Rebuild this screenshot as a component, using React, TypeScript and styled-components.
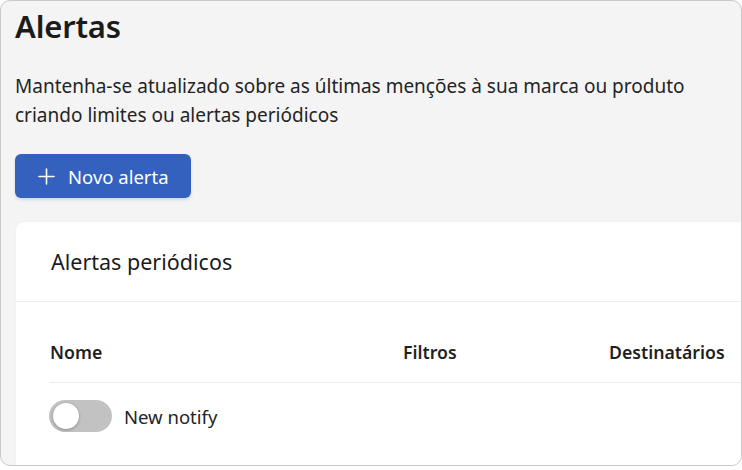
import React from "react";
import styled, { createGlobalStyle } from "styled-components";

const GlobalStyle = createGlobalStyle`
  html, body { margin: 0; padding: 0; background: #ffffff; }
  body { font-family: "Noto Sans", "Open Sans", sans-serif; color: #1f1f1f; }
  * { box-sizing: border-box; }
`;

const Frame = styled.div`
  width: 742px;
  height: 466px;
  border: 1px solid #c9c9c9;
  border-radius: 10px;
  background: #f4f4f4;
  overflow: hidden;
  padding-left: 14px;
  display: flex;
  flex-direction: column;
`;

const Title = styled.h1`
  margin: 3px 0 0 0;
  font-size: 31px;
  line-height: 44px;
  font-weight: 600;
  color: #1b1b1b;
  letter-spacing: -0.2px;
`;

const Description = styled.p`
  margin: 24px 0 0 0;
  width: 690px;
  font-size: 19px;
  line-height: 29px;
  color: #242424;
`;

const PrimaryButton = styled.button`
  margin-top: 24px;
  align-self: flex-start;
  height: 44px;
  width: 176px;
  display: flex;
  align-items: center;
  gap: 13px;
  padding: 0 0 0 23px;
  border: none;
  border-radius: 6px;
  background: #3461bd;
  color: #ffffff;
  font-family: inherit;
  font-size: 18.5px;
  box-shadow: 0 2px 3px rgba(52, 97, 189, 0.18);
  cursor: pointer;
`;

const Card = styled.section`
  margin-top: 24px;
  margin-left: 1px;
  width: 760px;
  flex: 1;
  background: #ffffff;
  border-radius: 8px 0 0 0;
  box-shadow: 0 0 2px rgba(0, 0, 0, 0.06);
`;

const CardHeader = styled.div`
  height: 80px;
  padding-left: 35px;
  display: flex;
  align-items: center;
  border-bottom: 1px solid #efefef;
  font-size: 21.5px;
  color: #1b1b1b;
`;

const Table = styled.div`
  margin-left: 33px;
`;

const HeadRow = styled.div`
  height: 81px;
  display: grid;
  grid-template-columns: 353px 206px 1fr;
  align-items: center;
  padding-left: 1px;
  padding-top: 19px;
  border-bottom: 1px solid #ececec;
  font-size: 17.7px;
  font-weight: 600;
  color: #1f1f1f;
`;

const BodyRow = styled.div`
  height: 66px;
  display: flex;
  align-items: center;
  gap: 12px;
  font-size: 18.5px;
  color: #242424;
`;

const Toggle = styled.span<{ $on?: boolean }>`
  width: 63px;
  height: 32px;
  border-radius: 16px;
  background: ${(p) => (p.$on ? "#3461bd" : "#c2c2c2")};
  display: flex;
  align-items: center;
  padding: 0 4px;
  justify-content: ${(p) => (p.$on ? "flex-end" : "flex-start")};
`;

const Knob = styled.span`
  width: 26px;
  height: 26px;
  border-radius: 50%;
  background: #ffffff;
  box-shadow: 0 1px 3px rgba(0, 0, 0, 0.3);
`;

const PlusIcon = () => (
  <svg width="17" height="17" viewBox="0 0 17 17" fill="none">
    <path d="M8.5 1v15M1 8.5h15" stroke="#ffffff" strokeWidth="1.6" strokeLinecap="round" />
  </svg>
);

export default function App() {
  return (
    <>
      <GlobalStyle />
      <Frame>
        <Title>Alertas</Title>
        <Description>
          Mantenha-se atualizado sobre as últimas menções à sua marca ou produto criando limites ou alertas periódicos
        </Description>
        <PrimaryButton>
          <PlusIcon />
          Novo alerta
        </PrimaryButton>
        <Card>
          <CardHeader>Alertas periódicos</CardHeader>
          <Table>
            <HeadRow>
              <span>Nome</span>
              <span>Filtros</span>
              <span>Destinatários</span>
            </HeadRow>
            <BodyRow>
              <Toggle role="switch" aria-checked="false">
                <Knob />
              </Toggle>
              New notify
            </BodyRow>
          </Table>
        </Card>
      </Frame>
    </>
  );
}
